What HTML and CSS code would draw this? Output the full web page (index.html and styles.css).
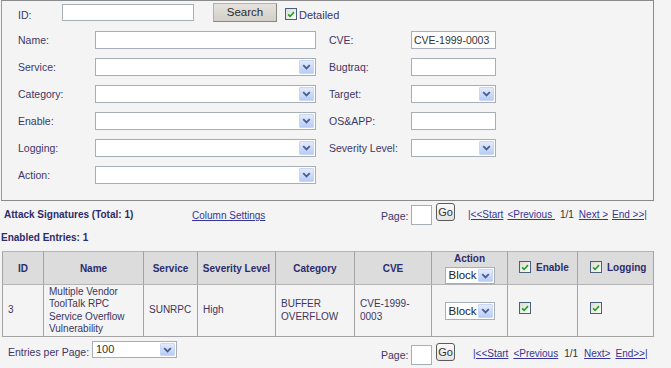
FILE: index.html
```html
<!DOCTYPE html>
<html>
<head>
<meta charset="utf-8">
<link rel="stylesheet" href="styles.css">
</head>
<body>
<div class="panel">
  <div class="idrow">
    <span class="lbl id-lbl">ID:</span>
    <input class="txt id-input" type="text">
    <span class="btn search">Search</span>
    <span class="cb detailed-cb"><svg viewBox="0 0 11 11" width="11" height="11"><path d="M2.3 5.4 L4.5 7.6 L8.8 2.9" stroke="#1fa01f" stroke-width="1.7" fill="none"/></svg></span>
    <span class="lbl det">Detailed</span>
  </div>
  <div class="form">
    <span class="lbl">Name:</span>
    <input class="txt" type="text">
    <span class="lbl l2">CVE:</span>
    <input class="txt c2 cve" type="text" value="CVE-1999-0003">

    <span class="lbl">Service:</span>
    <span class="sel"><span class="val"></span><span class="arr"><svg viewBox="0 0 9 6" width="9" height="6"><path d="M1.2 1.2 L4.5 4.5 L7.8 1.2" stroke="#4a5f8c" stroke-width="1.8" fill="none"/></svg></span></span>
    <span class="lbl l2">Bugtraq:</span>
    <input class="txt c2" type="text">

    <span class="lbl">Category:</span>
    <span class="sel"><span class="val"></span><span class="arr"><svg viewBox="0 0 9 6" width="9" height="6"><path d="M1.2 1.2 L4.5 4.5 L7.8 1.2" stroke="#4a5f8c" stroke-width="1.8" fill="none"/></svg></span></span>
    <span class="lbl l2">Target:</span>
    <span class="sel c2"><span class="val"></span><span class="arr"><svg viewBox="0 0 9 6" width="9" height="6"><path d="M1.2 1.2 L4.5 4.5 L7.8 1.2" stroke="#4a5f8c" stroke-width="1.8" fill="none"/></svg></span></span>

    <span class="lbl">Enable:</span>
    <span class="sel"><span class="val"></span><span class="arr"><svg viewBox="0 0 9 6" width="9" height="6"><path d="M1.2 1.2 L4.5 4.5 L7.8 1.2" stroke="#4a5f8c" stroke-width="1.8" fill="none"/></svg></span></span>
    <span class="lbl l2">OS&amp;APP:</span>
    <input class="txt c2" type="text">

    <span class="lbl">Logging:</span>
    <span class="sel"><span class="val"></span><span class="arr"><svg viewBox="0 0 9 6" width="9" height="6"><path d="M1.2 1.2 L4.5 4.5 L7.8 1.2" stroke="#4a5f8c" stroke-width="1.8" fill="none"/></svg></span></span>
    <span class="lbl l2">Severity Level:</span>
    <span class="sel c2"><span class="val"></span><span class="arr"><svg viewBox="0 0 9 6" width="9" height="6"><path d="M1.2 1.2 L4.5 4.5 L7.8 1.2" stroke="#4a5f8c" stroke-width="1.8" fill="none"/></svg></span></span>

    <span class="lbl">Action:</span>
    <span class="sel"><span class="val"></span><span class="arr"><svg viewBox="0 0 9 6" width="9" height="6"><path d="M1.2 1.2 L4.5 4.5 L7.8 1.2" stroke="#4a5f8c" stroke-width="1.8" fill="none"/></svg></span></span>
  </div>
</div>

<div class="toolbar">
  <span class="title">Attack Signatures (Total: 1)</span>
  <a class="link colset" href="#">Column Settings </a>
  <div class="pager">
    <span class="lbl plbl">Page:</span>
    <input class="txt pinput" type="text">
    <span class="gobtn">Go</span>
    <span class="links">
      <a class="link" href="#">|&lt;&lt;Start</a>
      <a class="link" href="#">&lt;Previous </a>
      <span class="count">1/1</span>
      <a class="link" href="#">Next &gt;</a>
      <a class="link" href="#">End &gt;&gt;|</a>
    </span>
  </div>
</div>

<div class="enabled">Enabled Entries: 1</div>

<table class="sigs">
  <colgroup>
    <col style="width:41px"><col style="width:100px"><col style="width:54px"><col style="width:78px"><col style="width:79px"><col style="width:77px"><col style="width:76px"><col style="width:70px"><col style="width:76px">
  </colgroup>
  <thead>
    <tr>
      <th>ID</th>
      <th>Name</th>
      <th>Service</th>
      <th>Severity Level</th>
      <th>Category</th>
      <th>CVE</th>
      <th class="act-h">
        <div class="act-title">Action</div>
        <span class="sel small"><span class="val">Block</span><span class="arr"><svg viewBox="0 0 9 6" width="9" height="6"><path d="M1.2 1.2 L4.5 4.5 L7.8 1.2" stroke="#4a5f8c" stroke-width="1.8" fill="none"/></svg></span></span>
      </th>
      <th class="chk-h en-h"><span class="cbwrap"><span class="cb"><svg viewBox="0 0 11 11" width="11" height="11"><path d="M2.3 5.4 L4.5 7.6 L8.8 2.9" stroke="#1fa01f" stroke-width="1.7" fill="none"/></svg></span>Enable</span></th>
      <th class="chk-h lg-h"><span class="cbwrap"><span class="cb"><svg viewBox="0 0 11 11" width="11" height="11"><path d="M2.3 5.4 L4.5 7.6 L8.8 2.9" stroke="#1fa01f" stroke-width="1.7" fill="none"/></svg></span>Logging</span></th>
    </tr>
  </thead>
  <tbody>
    <tr>
      <td>3</td>
      <td>Multiple Vendor ToolTalk RPC Service Overflow Vulnerability</td>
      <td>SUNRPC</td>
      <td>High</td>
      <td>BUFFER OVERFLOW</td>
      <td>CVE-1999-0003</td>
      <td class="act-c"><span class="sel small"><span class="val">Block</span><span class="arr"><svg viewBox="0 0 9 6" width="9" height="6"><path d="M1.2 1.2 L4.5 4.5 L7.8 1.2" stroke="#4a5f8c" stroke-width="1.8" fill="none"/></svg></span></span></td>
      <td class="en-c"><span class="cb"><svg viewBox="0 0 11 11" width="11" height="11"><path d="M2.3 5.4 L4.5 7.6 L8.8 2.9" stroke="#1fa01f" stroke-width="1.7" fill="none"/></svg></span></td>
      <td class="lg-c"><span class="cb"><svg viewBox="0 0 11 11" width="11" height="11"><path d="M2.3 5.4 L4.5 7.6 L8.8 2.9" stroke="#1fa01f" stroke-width="1.7" fill="none"/></svg></span></td>
    </tr>
  </tbody>
</table>

<div class="bottombar">
  <div class="perpage">
    <span class="lbl epp">Entries per Page:</span>
    <span class="sel eppsel"><span class="val">100</span><span class="arr"><svg viewBox="0 0 9 6" width="9" height="6"><path d="M1.2 1.2 L4.5 4.5 L7.8 1.2" stroke="#4a5f8c" stroke-width="1.8" fill="none"/></svg></span></span>
  </div>
  <div class="pager bpager">
    <span class="lbl plbl">Page:</span>
    <input class="txt pinput" type="text">
    <span class="gobtn">Go</span>
    <span class="links">
      <a class="link" href="#">|&lt;&lt;Start</a>
      <a class="link" href="#">&lt;Previous</a>
      <span class="count">1/1</span>
      <a class="link" href="#">Next&gt;</a>
      <a class="link" href="#">End&gt;&gt;|</a>
    </span>
  </div>
</div>
</body>
</html>
```
FILE: styles.css
```css
* { box-sizing: border-box; }
html, body { margin: 0; padding: 0; }
body {
  background: #f4f4f4;
  font-family: "Liberation Sans", Arial, sans-serif;
  font-size: 10px;
  color: #3d3560;
  width: 671px;
  height: 368px;
  overflow: hidden;
}

.lbl { color: #403667; font-size: 10.5px; line-height: 12px; white-space: nowrap; }

.txt {
  display: block;
  margin: 0;
  padding: 0 3px;
  border: 1px solid #a7aeb6;
  background: #fff;
  font-family: "Liberation Sans", Arial, sans-serif;
  font-size: 11px;
  color: #333;
  height: 18px;
  outline: none;
}
.txt.cve { font-size: 10.5px; padding: 0 2px; }

/* ---------- search panel ---------- */
.panel {
  margin-left: 1px;
  width: 653px;
  height: 201px;
  border: 1px solid #8a8a8a;
  border-left-color: #9a9a9a;
}

.idrow {
  display: flex;
  align-items: flex-start;
  padding: 2px 0 0 16px;
  height: 22px;
}
.id-lbl { width: 44px; margin-top: 6px; }
.id-input { width: 132px; height: 17px; margin-top: 1px; }
.btn.search {
  margin-left: 19px;
  width: 64px;
  height: 19px;
  border: 1px solid #b5b2ab;
  border-right-color: #8a877f;
  border-bottom-color: #8a877f;
  background: linear-gradient(#e6e3de, #d2cfc8);
  color: #2b2b2b;
  font-size: 11.5px;
  line-height: 17px;
  text-align: center;
}
.detailed-cb { margin: 5px 0 0 8px; }
.det { margin: 6px 0 0 2px; font-size: 11px; }

.cb {
  display: inline-flex;
  width: 12px;
  height: 12px;
  border: 1px solid #4a6078;
  background: linear-gradient(135deg, #dcdcd6, #fbfbfa);
  align-items: center;
  justify-content: center;
  flex: none;
}
.cb svg { display: block; }

.form {
  display: grid;
  grid-template-columns: 77px 221px 13px 82px 85px;
  grid-auto-rows: 18px;
  row-gap: 9px;
  margin-top: 8px;
  padding-left: 16px;
  align-items: center;
}
.form .l2 { grid-column: 4; }
.form .c2 { grid-column: 5; }
.form .txt { width: 100%; }

.sel {
  display: flex;
  align-items: stretch;
  height: 18px;
  border: 1px solid #a7aeb6;
  background: #fff;
}
.sel .val {
  flex: 1;
  padding-left: 3px;
  font-size: 11px;
  line-height: 15px;
  color: #333;
}
.sel .arr {
  width: 15px;
  margin: 1px;
  border-radius: 1px;
  background: linear-gradient(#e3ebfd, #b8ccf7);
  border: 1px solid #c9d6f4;
  display: flex;
  align-items: center;
  justify-content: center;
}

/* ---------- toolbar ---------- */
.toolbar {
  display: grid;
  grid-template-columns: 188px 189px auto;
  align-items: start;
  padding-left: 4px;
  margin-top: 1px;
  height: 24px;
}
.title {
  font-weight: bold;
  font-size: 10px;
  color: #2c2c6c;
  padding-top: 7px;
  line-height: 12px;
}
.link { color: #35359b; text-decoration: underline; font-size: 10px; }
.colset { padding-top: 8px; line-height: 12px; justify-self: start; }

.pager {
  display: flex;
  align-items: flex-start;
}
.plbl { width: 30px; margin-top: 8px; font-size: 10.5px; }
.pinput { width: 21px; height: 20px; margin-top: 3px; }
.gobtn {
  margin-left: 4px;
  margin-top: 1px;
  width: 19px;
  height: 18px;
  border: 1px solid #5a5a5a;
  border-radius: 3px;
  background: linear-gradient(#fafafa, #e3e3e3);
  color: #333;
  font-size: 11px;
  line-height: 16px;
  text-align: center;
}
.links {
  display: flex;
  gap: 4px;
  margin-left: 13px;
  margin-top: 7px;
  line-height: 12px;
  white-space: pre;
}
.count { color: #333; font-size: 10px; margin: 0 1px; }

.enabled {
  font-weight: bold;
  font-size: 10px;
  color: #2c2c6c;
  line-height: 12px;
  margin: 6px 0 0 1px;
}

/* ---------- table ---------- */
.sigs {
  margin: 7px 0 0 2px;
  width: 652px;
  table-layout: fixed;
  border-collapse: collapse;
  border: 1px solid #a3a3a3;
}
.sigs th, .sigs td {
  border: 1px solid #a3a3a3;
  padding: 0 5px;
  vertical-align: middle;
}
.sigs thead tr { height: 32px; }
.sigs th {
  background: #dcdcdc;
  color: #2c2c6c;
  font-size: 10px;
  font-weight: bold;
  text-align: center;
  white-space: nowrap;
  padding: 0 2px;
  border-color: #b4b4b4 #a3a3a3;
}
.sigs tbody tr { height: 52px; }
.sigs td {
  font-size: 10px;
  line-height: 12.5px;
  color: #3d3560;
  text-align: left;
}
.act-h { padding: 0 !important; }
.act-title { line-height: 12px; margin-top: 1px; }
.sel.small { width: 50px; height: 17px; margin: 2px auto 0; text-align: left; }
.sel.small .val { font-size: 11.5px; font-weight: normal; line-height: 15px; color: #222; }
.act-c { text-align: center !important; padding: 0 !important; }
.act-c .sel.small { height: 18px; margin: 0 auto; width: 50px; }
.act-c .sel.small .val { line-height: 16px; }

.chk-h { text-align: left !important; }
.en-h { padding-left: 11px !important; }
.lg-h { padding-left: 12px !important; }
.cbwrap { display: inline-flex; align-items: center; gap: 5px; }
.en-c { padding-left: 11px !important; }
.lg-c { padding-left: 12px !important; }
.en-c .cb, .lg-c .cb { margin-top: -2px; }

/* ---------- bottom bar ---------- */
.bottombar {
  display: grid;
  grid-template-columns: 381px auto;
  align-items: start;
  margin-top: 3px;
}
.perpage { display: flex; align-items: flex-start; padding-left: 8px; }
.epp { margin-top: 6px; width: 84px; font-size: 10.5px; }
.eppsel { width: 85px; height: 17px; margin-top: 1px; }
.bpager .pinput { margin-top: 5px; }
.bpager .gobtn { margin-top: 3px; }
.bpager .plbl { margin-top: 9px; }
.bpager .links { margin-left: 18px; margin-top: 8px; gap: 5px; }
```
